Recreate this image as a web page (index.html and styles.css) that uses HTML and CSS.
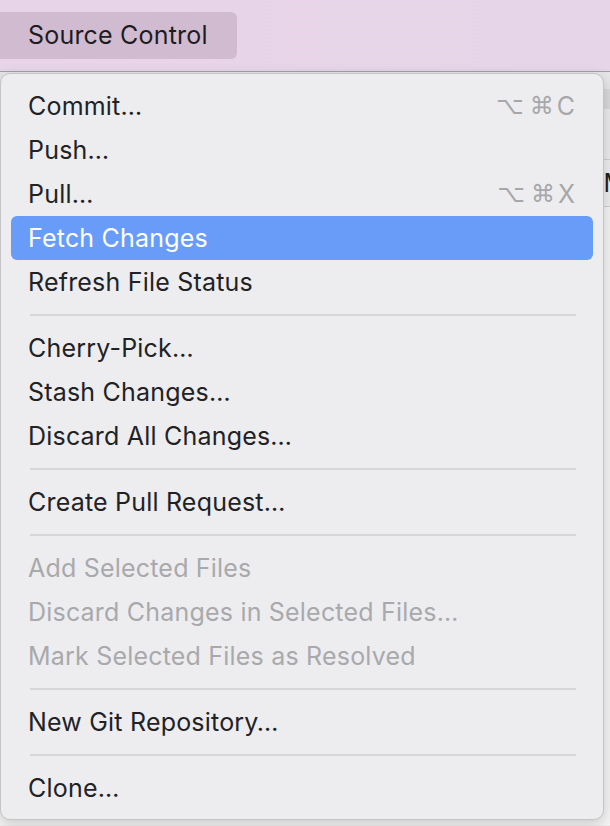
FILE: index.html
```html
<!DOCTYPE html>
<html>
<head>
<meta charset="utf-8">
<link rel="stylesheet" href="styles.css">
</head>
<body>
<div class="bar">
  <div class="bar-btn">Source Control</div>
</div>
<div class="window">
  <div class="band-a"></div>
  <div class="band-b"></div>
  <div class="band-c"></div>
  <div class="row"><span class="peek">M</span></div>
  <div class="rest"></div>
</div>
<div class="menu">
  <div class="item"><span>Commit…</span><span class="key"><span class="sym">⌥</span><span class="sym cmd">⌘</span><span class="ltr">C</span></span></div>
  <div class="item"><span>Push…</span></div>
  <div class="item"><span>Pull…</span><span class="key"><span class="sym">⌥</span><span class="sym cmd">⌘</span><span class="ltr">X</span></span></div>
  <div class="item active"><span>Fetch Changes</span></div>
  <div class="item"><span>Refresh File Status</span></div>
  <div class="sep"></div>
  <div class="item"><span>Cherry-Pick…</span></div>
  <div class="item"><span>Stash Changes…</span></div>
  <div class="item"><span>Discard All Changes…</span></div>
  <div class="sep"></div>
  <div class="item"><span>Create Pull Request…</span></div>
  <div class="sep"></div>
  <div class="item disabled"><span>Add Selected Files</span></div>
  <div class="item disabled"><span>Discard Changes in Selected Files…</span></div>
  <div class="item disabled"><span>Mark Selected Files as Resolved</span></div>
  <div class="sep"></div>
  <div class="item"><span>New Git Repository…</span></div>
  <div class="sep"></div>
  <div class="item"><span>Clone…</span></div>
</div>
</body>
</html>
```
FILE: styles.css
```css
html, body {
  margin: 0;
  padding: 0;
}
body {
  width: 610px;
  height: 826px;
  overflow: hidden;
  background: #ececec;
  font-family: "Inter", "Liberation Sans", sans-serif;
  position: relative;
}
.bar {
  height: 72px;
  box-sizing: border-box;
  padding-top: 12px;
  background: linear-gradient(90deg, #e8d4e8 0%, #e6d5e8 100%);
  border-bottom: 1px solid #a59fa8;
}
.bar-btn {
  width: 237px;
  height: 47px;
  box-sizing: border-box;
  padding-left: 28px;
  background: #d1bbd1;
  border-radius: 0 6px 6px 0;
  font-size: 25px;
  letter-spacing: 0.2px;
  line-height: 47px;
  color: #1d1d1f;
}
.window {
  background: #f4f4f5;
  height: 753px;
}
.band-a {
  height: 17px;
  background: #e6e6e8;
}
.band-b {
  height: 20px;
  background: #d9d9dc;
}
.band-c {
  height: 50px;
  background: #ebebed;
  border-bottom: 1px solid #cfcfd1;
}
.row {
  height: 46px;
  background: #ededee;
  border-bottom: 1px solid #cfcfd1;
  display: flex;
  justify-content: flex-end;
  align-items: center;
}
.peek {
  font-size: 25px;
  color: #222;
  margin-right: -16px;
}
.menu {
  position: absolute;
  left: 0;
  top: 73px;
  width: 604px;
  height: 747px;
  box-sizing: border-box;
  padding: 10px 0 9px;
  background: #ededf0;
  border: 1px solid #c4c3c7;
  border-radius: 10px;
  box-shadow: 0 4px 14px rgba(0,0,0,0.18);
  display: flex;
  flex-direction: column;
}
.item {
  height: 44px;
  margin: 0 10px;
  padding: 0 18px 0 17px;
  border-radius: 6px;
  display: flex;
  align-items: center;
  justify-content: space-between;
  font-size: 25px;
  letter-spacing: 0.2px;
  color: #222224;
  flex-shrink: 0;
}
.item.active {
  background: #699cf8;
  color: #ffffff;
}
.item.disabled {
  color: #a9a9ac;
}
.key {
  display: flex;
  align-items: center;
  color: #a7a7a9;
}
.sym {
  font-family: "DejaVu Sans", sans-serif;
  font-size: 24px;
  letter-spacing: 0;
  line-height: 1;
}
.cmd {
  margin-left: 6px;
  margin-right: 3px;
}
.ltr {
  letter-spacing: 0;
}
.sep {
  height: 22px;
  flex-shrink: 0;
  display: flex;
  align-items: center;
  padding: 0 27px 0 29px;
}
.sep::before {
  content: "";
  display: block;
  width: 100%;
  height: 2px;
  background: #d6d6d9;
}
```
